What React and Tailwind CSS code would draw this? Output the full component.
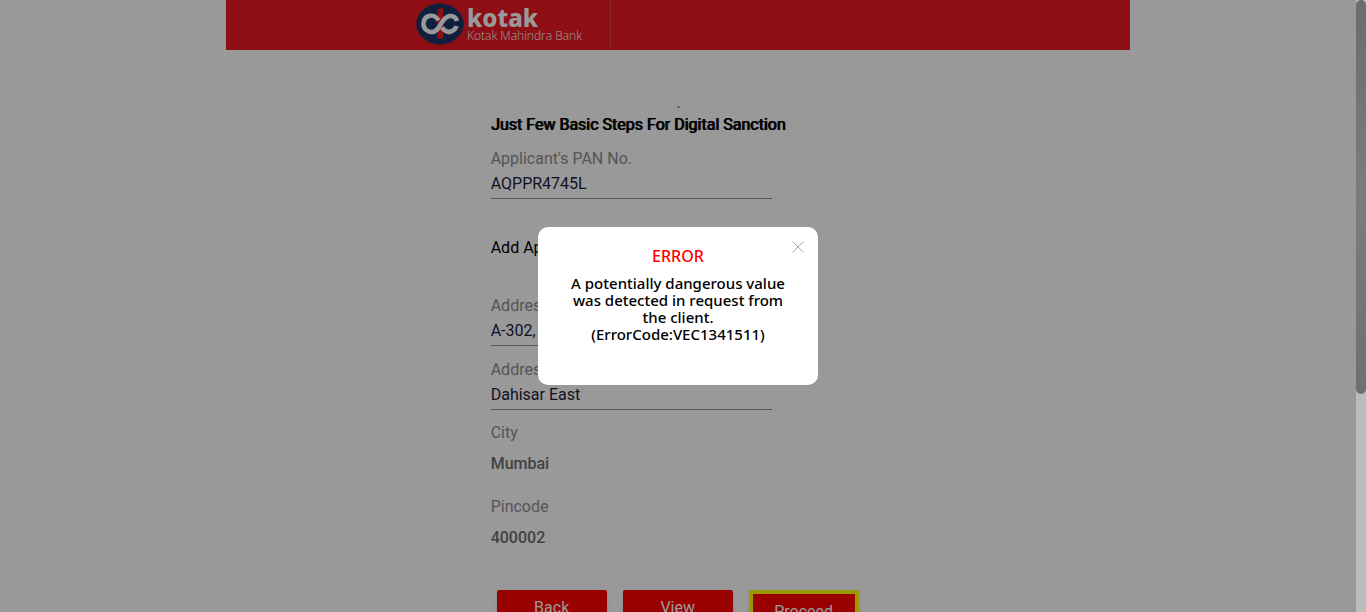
import React from "react";

function Logo() {
  return (
    <div className="flex items-start gap-[3px]">
      <svg viewBox="0 0 48 42" className="h-[42px] w-12" aria-hidden="true">
        <ellipse cx="24" cy="21" rx="23.7" ry="20.5" fill="#1d356a" />
        <path d="M21.500 6.500 27 4.500V35l-5.500 1z" fill="#ed1c24" />
        <path
          d="M22.500 17.500C20 13 16 12 13 13c-4 1-5.500 4.500-5.500 8 0 5 4 8 8.500 8 8.500 0 8.500-14.500 17.500-16 4-.5 6.500 1.500 7.500 5"
          fill="none"
          stroke="#fff"
          strokeWidth="4.500"
        />
        <path
          d="M26 24.500c3 4.500 6 5 9 4 3-.8 4.800-3 5.500-5.500"
          fill="none"
          stroke="#fff"
          strokeWidth="4.500"
        />
      </svg>
      <div className="flex flex-col pt-px text-white">
        <span className="flex h-6 flex-col justify-end font-['Noto_Sans','Open_Sans',sans-serif] text-2xl leading-5 font-extrabold">
          kotak
        </span>
        <span className="font-['Open_Sans',sans-serif] text-xs leading-4 font-light">Kotak Mahindra Bank</span>
      </div>
    </div>
  );
}

function Field({ id, label, value }) {
  return (
    <div className="flex flex-col">
      <label htmlFor={id} className="leading-6 text-[#8e8e8e]">{label}</label>
      <input
        id={id}
        type="text"
        defaultValue={value}
        className="h-7 w-3/4 border-b border-[#8e8e8e] bg-transparent pb-0.5 text-[#1c1c3c] outline-none"
      />
    </div>
  );
}

function Detail({ label, value }) {
  return (
    <div className="flex flex-col gap-[7px]">
      <dt className="leading-6 text-[#8e8e95]">{label}</dt>
      <dd className="leading-6 font-medium text-[#6e6e6e]">{value}</dd>
    </div>
  );
}

function ErrorDialog() {
  return (
    <div
      role="alertdialog"
      aria-modal="true"
      aria-labelledby="error-title"
      aria-describedby="error-text"
      className="relative w-[280px] rounded-[10px] bg-white px-7 pt-[19px] pb-[42px] text-center font-['Noto_Sans',sans-serif] font-medium"
    >
      <button type="button" aria-label="Close" className="absolute top-3.5 right-3.5 text-[#a5a5a5]">
        <svg viewBox="0 0 12 12" className="size-3" fill="none" stroke="currentColor">
          <path d="m.5.5 11 11M11.500.5.5 11.500" />
        </svg>
      </button>
      <h2 id="error-title" className="mb-[9px] text-base leading-5 text-[#ff0000]">ERROR</h2>
      <p id="error-text" className="text-[15px] leading-[17px] text-black">
        A potentially dangerous value was detected in request from the client.
        <br />
        (ErrorCode:VEC1341511)
      </p>
    </div>
  );
}

const actionClass = "h-9 w-[110px] rounded-xs bg-[#ff0000] text-white shadow-md";

export default function App() {
  return (
    <div className="flex h-screen overflow-hidden font-[Roboto,sans-serif] text-base">
      <div className="relative flex-1 overflow-hidden bg-white">
        <header className="mx-auto h-[50px] w-2/3 bg-[#eb1923]">
          <div className="flex h-full w-[385px] items-start justify-end border-r border-[#ef4048] pt-[3px] pr-7">
            <Logo />
          </div>
        </header>
        <main className="mx-auto w-2/3">
          <form className="mx-auto flex w-5/12 flex-col pt-11 pl-px">
            <p className="text-center leading-[18px] text-[#555]">.</p>
            <h1 className="mt-px mb-2.5 leading-6 font-normal text-black text-shadow-[1px_0_0_black]">
              Just Few Basic Steps For Digital Sanction
            </h1>
            <Field id="pan" label="Applicant's PAN No." value="AQPPR4745L" />
            <h2 className="mt-[37px] mb-[34px] leading-6 text-black">Add Applicant Address</h2>
            <div className="flex flex-col gap-3">
              <Field id="address-1" label="Address Line 1" value="A-302," />
              <Field id="address-2" label="Address Line 2" value="Dahisar East" />
            </div>
            <dl className="mt-[11px] flex flex-col gap-[19px]">
              <Detail label="City" value="Mumbai" />
              <Detail label="Pincode" value="400002" />
            </dl>
            <div className="mt-10 flex gap-4 pl-1.5">
              <button type="button" className={actionClass}>Back</button>
              <button type="button" className={actionClass}>View</button>
              <button
                type="submit"
                className="h-11 w-[110px] shrink-0 rounded-xs border-4 border-[#ffff00] bg-[#ff0000] text-white shadow-md"
              >
                Proceed
              </button>
            </div>
          </form>
        </main>
        <div className="absolute inset-0 flex items-center justify-center bg-black/40">
          <ErrorDialog />
        </div>
      </div>
      <div className="w-2.5 bg-[#bcbcbc]" aria-hidden="true">
        <div className="h-[64.400%] rounded-full bg-linear-to-b from-[#6c6c6c] via-[#7c7c7c] to-[#6f6f6f]" />
      </div>
    </div>
  );
}
